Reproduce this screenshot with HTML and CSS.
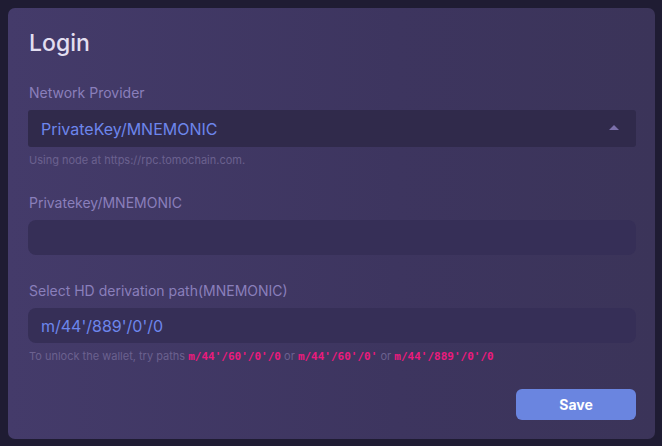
FILE: index.html
```html
<!DOCTYPE html>
<html>
<head>
<meta charset="utf-8">
<link rel="stylesheet" href="styles.css">
</head>
<body>
<div class="card">
  <h1 class="title">Login</h1>
  <div class="field first">
    <label class="label">Network Provider</label>
    <div class="select">
      <span class="select-value">PrivateKey/MNEMONIC</span>
      <span class="caret"></span>
    </div>
    <div class="hint">Using node at https://rpc.tomochain.com.</div>
  </div>
  <div class="field">
    <label class="label">Privatekey/MNEMONIC</label>
    <div class="input"></div>
  </div>
  <div class="field">
    <label class="label">Select HD derivation path(MNEMONIC)</label>
    <div class="input"><span class="input-value">m/44'/889'/0'/0</span></div>
    <div class="hint">To unlock the wallet, try paths <code>m/44'/60'/0'/0</code> or <code>m/44'/60'/0'</code> or <code>m/44'/889'/0'/0</code></div>
  </div>
  <div class="actions">
    <button class="btn">Save</button>
  </div>
</div>
</body>
</html>
```
FILE: styles.css
```css
html, body {
  margin: 0;
  padding: 0;
}
body {
  background: #1f1c33;
  font-family: Inter, "Noto Sans", sans-serif;
  padding: 8px 7px 8px 8px;
  height: 446px;
  box-sizing: border-box;
}
.card {
  height: 431px;
  box-sizing: border-box;
  border-radius: 7px;
  background: linear-gradient(to right, #443b6a, #3d355f 60%, #3b3459);
  padding: 21px 19px 0 20px;
  display: flex;
  flex-direction: column;
}
.title {
  margin: 0 0 0 1px;
  font-size: 23px;
  line-height: 28px;
  font-weight: 500;
  color: #e2def0;
}
.field {
  display: flex;
  flex-direction: column;
  margin-top: 27px;
}
.field.first {
  margin-top: 27px;
}
.label {
  font-size: 14px;
  line-height: 18px;
  color: #8a7fbb;
  margin: 0 0 8px 1px;
}
.select {
  height: 37px;
  border-radius: 3px;
  background: #302a4b;
  display: flex;
  align-items: center;
  padding: 0 17px 0 13px;
  justify-content: space-between;
}
.select-value, .input-value {
  font-size: 16px;
  color: #6d86ec;
}
.caret {
  width: 0;
  height: 0;
  border-left: 5px solid transparent;
  border-right: 5px solid transparent;
  border-bottom: 5px solid #7b6faa;
  margin-top: -2px;
}
.input {
  height: 35px;
  border-radius: 8px;
  background: #362f57;
  display: flex;
  align-items: center;
  padding: 0 13px;
}
.hint {
  font-size: 11px;
  line-height: 14px;
  color: #6b618f;
  margin-top: 6px;
  margin-left: 1px;
}
.hint code {
  font-family: "DejaVu Sans Mono", "Liberation Mono", monospace;
  font-weight: bold;
  font-size: 11px;
  color: #ec1a7d;
}
.actions {
  display: flex;
  justify-content: flex-end;
  margin-top: 25px;
}
.btn {
  width: 120px;
  height: 31px;
  border: 0;
  border-radius: 6px;
  background: #6a85e0;
  color: #ffffff;
  font-family: Inter, "Noto Sans", sans-serif;
  font-weight: 700;
  font-size: 14px;
  padding: 0;
}
```
